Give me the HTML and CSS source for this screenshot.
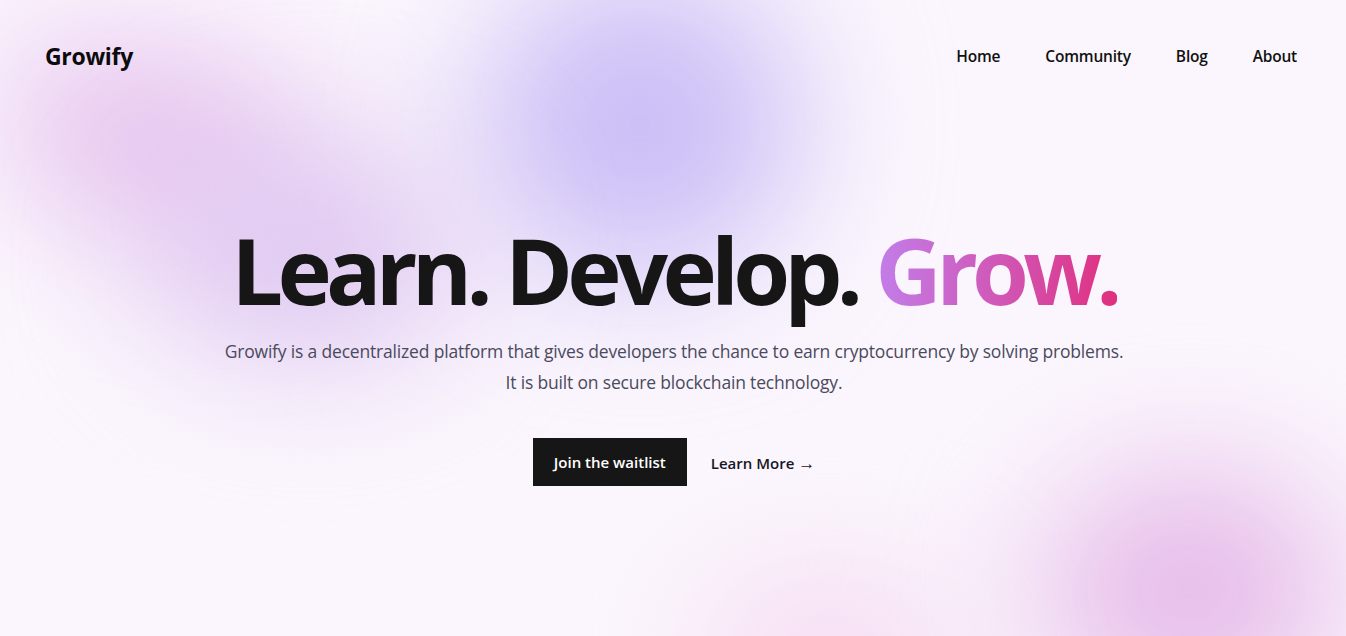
FILE: index.html
```html
<!DOCTYPE html>
<html lang="en">
<head>
<meta charset="utf-8">
<title>Growify</title>
<link rel="stylesheet" href="styles.css">
</head>
<body>
<div class="page">
  <div class="blobs" aria-hidden="true">
    <div class="blob blob-purple"></div>
    <div class="blob blob-left"></div>
    <div class="blob blob-left2"></div>
    <div class="blob blob-br"></div>
    <div class="blob blob-bottom"></div>
  </div>
  <header class="header">
    <a class="logo" href="#">Growify</a>
    <nav class="nav">
      <a href="#">Home</a>
      <a href="#">Community</a>
      <a href="#">Blog</a>
      <a href="#">About</a>
    </nav>
  </header>
  <main class="hero">
    <h1 class="title">Learn. Develop. <span class="grad">Grow.</span></h1>
    <p class="lead">Growify is a decentralized platform that gives developers the chance to earn cryptocurrency by solving problems.<br>It is built on secure blockchain technology.</p>
    <div class="actions">
      <a class="btn-primary" href="#">Join the waitlist</a>
      <a class="btn-link" href="#">Learn More <span class="arrow">→</span></a>
    </div>
  </main>
</div>
</body>
</html>
```

FILE: styles.css
```css
* { box-sizing: border-box; }
html, body { margin: 0; padding: 0; }
body {
  font-family: "Open Sans", "Noto Sans", sans-serif;
  color: #141414;
  background: #fbf6fd;
  overflow: hidden;
}
a { text-decoration: none; color: inherit; }
.page {
  position: relative;
  width: 100%;
  height: 636px;
  overflow: hidden;
  background: #fbf6fd;
}
.blobs { position: absolute; inset: 0; z-index: 0; }
.blob { position: absolute; border-radius: 50%; filter: blur(70px); }
.blob-purple {
  left: 480px; top: -30px; width: 320px; height: 310px;
  background: #cbbdf6;
}
.blob-left {
  left: -10px; top: 50px; width: 340px; height: 190px;
  background: #e6c2ee;
  transform: rotate(18deg);
}
.blob-left2 {
  left: 150px; top: 150px; width: 320px; height: 210px;
  background: #dec7f1;
}
.blob-br {
  left: 1040px; top: 470px; width: 300px; height: 240px;
  background: #e5b9e8;
}
.blob-bottom {
  left: 700px; top: 590px; width: 260px; height: 120px;
  background: #f3d0ed;
}
.header {
  position: relative;
  z-index: 1;
  display: flex;
  align-items: center;
  justify-content: space-between;
  padding: 40px 49px 0 45px;
}
.logo {
  font-size: 23px;
  font-weight: 700;
  letter-spacing: -0.3px;
  color: #0c0c0c;
}
.nav { display: flex; gap: 45px; }
.nav a {
  font-size: 15.5px;
  font-weight: 600;
  color: #111;
  letter-spacing: -0.2px;
}
.hero {
  position: relative;
  z-index: 1;
  display: flex;
  flex-direction: column;
  align-items: center;
  padding-top: 152px;
  padding-left: 2px;
}
.title {
  margin: 0;
  font-size: 92px;
  font-weight: 700;
  line-height: 1;
  letter-spacing: -5.8px;
  color: #161616;
}
.grad {
  background: linear-gradient(90deg, #c27eea 0%, #d058b8 50%, #e02f7e 100%);
  -webkit-background-clip: text;
  background-clip: text;
  color: transparent;
}
.lead {
  margin: 20px 0 0;
  text-align: center;
  font-size: 17.5px;
  line-height: 31px;
  color: #4a4a5c;
  letter-spacing: -0.18px;
}
.actions {
  display: flex;
  align-items: center;
  gap: 24px;
  margin-top: 40px;
}
.btn-primary {
  display: flex;
  align-items: center;
  justify-content: center;
  width: 154px;
  height: 48px;
  background: #171616;
  color: #fff;
  font-size: 15px;
  font-weight: 600;
}
.btn-link {
  font-size: 15px;
  font-weight: 600;
  color: #161626;
}
.arrow { font-size: 17px; font-weight: 400; }
```
